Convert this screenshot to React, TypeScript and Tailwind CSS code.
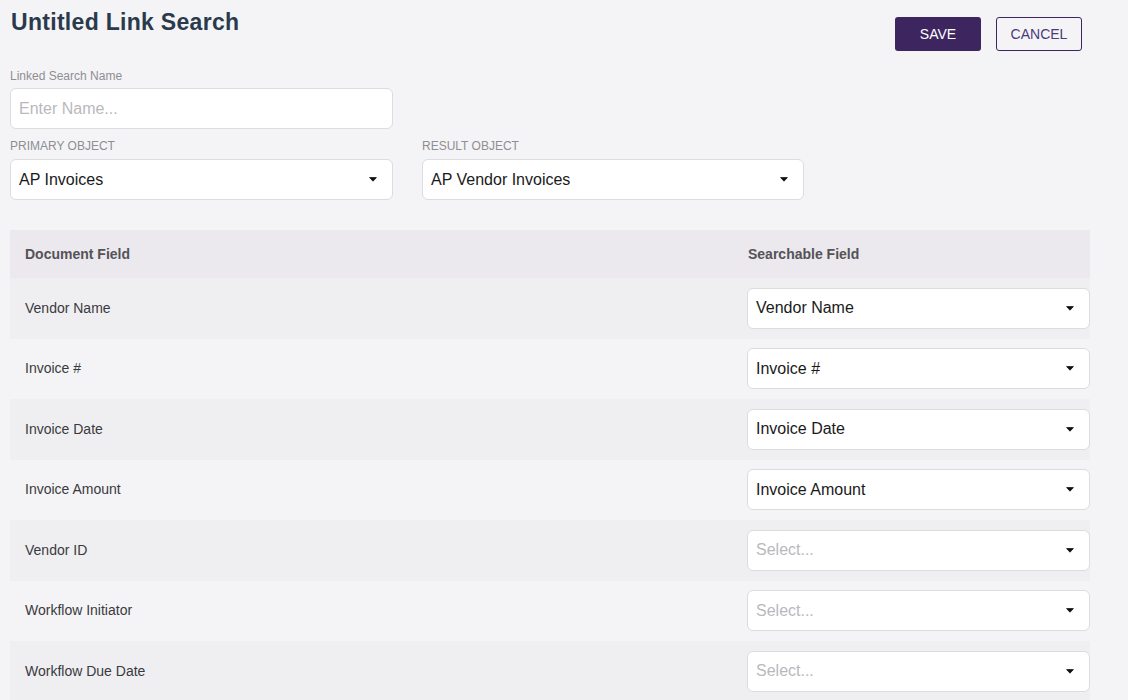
const rows: { label: string; value?: string }[] = [
  { label: "Vendor Name", value: "Vendor Name" },
  { label: "Invoice #", value: "Invoice #" },
  { label: "Invoice Date", value: "Invoice Date" },
  { label: "Invoice Amount", value: "Invoice Amount" },
  { label: "Vendor ID" },
  { label: "Workflow Initiator" },
  { label: "Workflow Due Date" },
];

const Caret = () => (
  <svg width="8" height="5" viewBox="0 0 8 5" className="shrink-0">
    <path d="M0.6 0.6 L7.4 0.6 L4 4.2 Z" fill="#111" stroke="#111" strokeWidth="0.8" strokeLinejoin="round" />
  </svg>
);

const SelectBox = ({ value, placeholder, className }: { value?: string; placeholder?: string; className?: string }) => (
  <div
    className={`h-[41px] bg-white border border-[#dcdcdf] rounded-[6px] flex items-center justify-between pl-[8px] pr-[15px] text-[16px] ${className ?? ""}`}
  >
    {value ? (
      <span className="text-[#1a1a1a]">{value}</span>
    ) : (
      <span className="text-[#b9b9bd]">{placeholder}</span>
    )}
    <Caret />
  </div>
);

export default function App() {
  return (
    <div className="min-h-[700px] w-full bg-[#f4f4f6] font-['Liberation_Sans',Arial,sans-serif] overflow-hidden">
      <div className="w-[1090px] pl-[10px]">
        <div className="flex justify-between items-start">
          <h1 className="pt-[8px] pl-[1px] text-[23px] leading-[28px] tracking-[0.3px] font-bold text-[#2a3a4c]">Untitled Link Search</h1>
          <div className="flex gap-[15px] pt-[17px] pr-[8px]">
            <button className="w-[86px] h-[34px] rounded-[3px] bg-[#3d2560] text-white text-[14px]">SAVE</button>
            <button className="w-[86px] h-[34px] rounded-[3px] border border-[#3d2560] text-[#4c3a78] text-[14px]">CANCEL</button>
          </div>
        </div>

        <div className="mt-[18px] text-[12px] leading-[14px] text-[#8e8e93]">Linked Search Name</div>
        <div className="mt-[5px] w-[383px] h-[41px] bg-white border border-[#dcdcdf] rounded-[6px] flex items-center pl-[8px] text-[16px] text-[#b9b9bd]">
          Enter Name...
        </div>

        <div className="mt-[10px] flex gap-[29px]">
          <div className="w-[383px]">
            <div className="text-[12px] leading-[14px] text-[#8e8e93]">PRIMARY OBJECT</div>
            <SelectBox value="AP Invoices" className="mt-[6px]" />
          </div>
          <div className="w-[382px]">
            <div className="text-[12px] leading-[14px] text-[#8e8e93]">RESULT OBJECT</div>
            <SelectBox value="AP Vendor Invoices" className="mt-[6px]" />
          </div>
        </div>

        <div className="mt-[30px] w-[1080px]">
          <div className="h-[48px] bg-[#ebe9ee] flex items-center text-[14px] font-bold text-[#555258]">
            <div className="w-[738px] pl-[15px]">Document Field</div>
            <div>Searchable Field</div>
          </div>
          {rows.map((r, i) => (
            <div
              key={r.label}
              className={`h-[60.5px] flex items-center ${i % 2 === 0 ? "bg-[#efeff2]" : "bg-[#f4f4f6]"}`}
            >
              <div className="w-[737px] pl-[15px] text-[14px] text-[#3a3a3e]">{r.label}</div>
              <SelectBox value={r.value} placeholder="Select..." className="w-[343px]" />
            </div>
          ))}
        </div>
      </div>
    </div>
  );
}
